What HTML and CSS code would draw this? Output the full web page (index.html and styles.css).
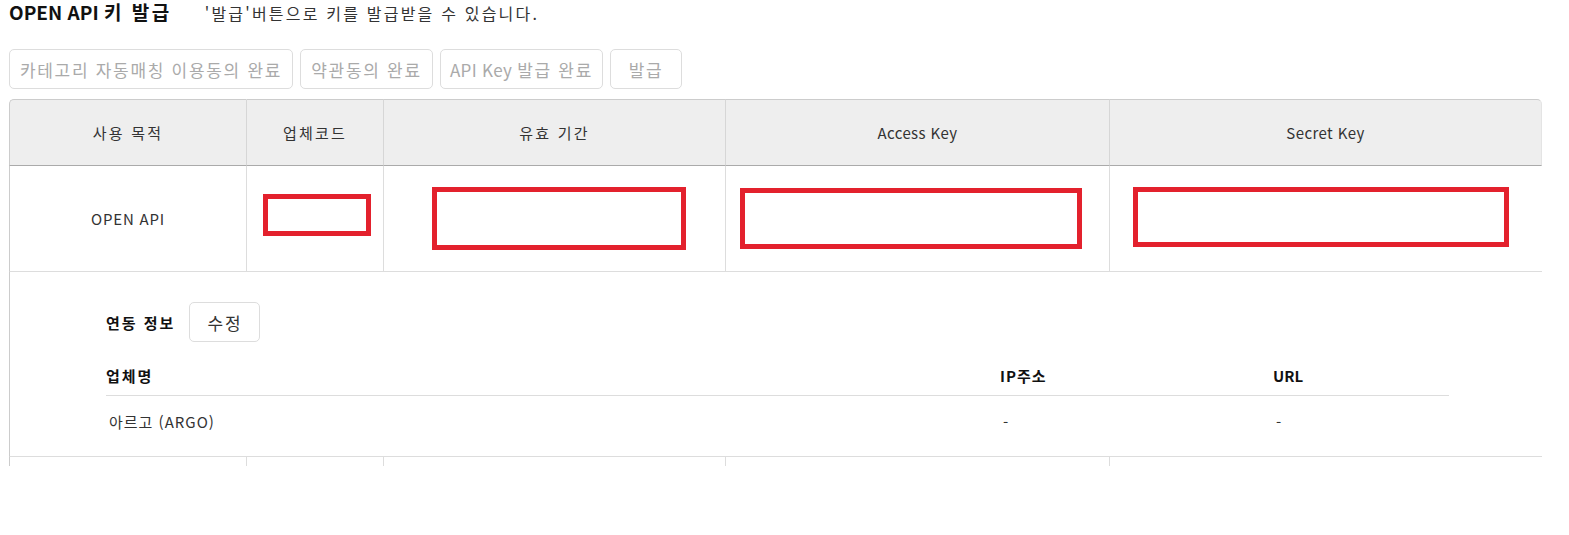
FILE: index.html
```html
<!DOCTYPE html>
<html lang="ko">
<head>
  <meta charset="UTF-8">
  <title>OPEN API 키 발급</title>
  <link rel="stylesheet" href="styles.css">
</head>
<body>
  <div class="api-page">
    <div class="page-head">
      <h2>OPEN API <span class="ko">키 발급</span></h2>
      <p>'발급'버튼으로 키를 발급받을 수 있습니다.</p>
    </div>

    <div class="step-buttons">
      <button class="btn btn-agree" disabled>카테고리 자동매칭 이용동의 완료</button>
      <button class="btn btn-terms" disabled>약관동의 완료</button>
      <button class="btn btn-key" disabled>API Key <span class="ko">발급 완료</span></button>
      <button class="btn btn-issue" disabled>발급</button>
    </div>

    <table class="key-table">
      <colgroup>
        <col class="c-purpose">
        <col class="c-code">
        <col class="c-period">
        <col class="c-access">
        <col class="c-secret">
      </colgroup>
      <thead>
        <tr>
          <th class="ko">사용 목적</th>
          <th class="ko">업체코드</th>
          <th class="ko">유효 기간</th>
          <th>Access Key</th>
          <th>Secret Key</th>
        </tr>
      </thead>
      <tbody>
        <tr class="key-row">
          <td class="purpose">OPEN API</td>
          <td><span class="mask mask-code"></span></td>
          <td><span class="mask mask-period"></span></td>
          <td><span class="mask mask-access"></span></td>
          <td><span class="mask mask-secret"></span></td>
        </tr>
        <tr class="detail-row">
          <td colspan="5">
            <div class="link-head">
              <strong>연동 정보</strong>
              <button class="btn btn-edit">수정</button>
            </div>
            <table class="link-table">
              <thead>
                <tr>
                  <th class="l-name">업체명</th>
                  <th class="l-ip">IP주소</th>
                  <th class="l-url">URL</th>
                </tr>
              </thead>
              <tbody>
                <tr>
                  <td class="company">아르고 (ARGO)</td>
                  <td>-</td>
                  <td>-</td>
                </tr>
              </tbody>
            </table>
          </td>
        </tr>
        <tr class="stub-row">
          <td></td><td></td><td></td><td></td><td></td>
        </tr>
      </tbody>
    </table>
  </div>
</body>
</html>
```

FILE: styles.css
```css
* {
  margin: 0;
  padding: 0;
  box-sizing: border-box;
}

body {
  font-family: "Noto Sans CJK KR", "Noto Sans", sans-serif;
  line-height: 1.4;
  color: #333;
  background-color: #fff;
}

.api-page {
  width: 1533px;
  margin-left: 9px;
}

.page-head {
  display: flex;
  align-items: baseline;
  gap: 33px;
  height: 26px;
  padding-top: 1px;
}

.page-head h2 {
  font-size: 19px;
  font-weight: 700;
  color: #111;
  line-height: 22px;
}

.page-head h2 .ko {
  letter-spacing: 2.5px;
}

.page-head p {
  font-size: 16px;
  color: #333;
  line-height: 22px;
  letter-spacing: 2.2px;
}

.step-buttons {
  display: flex;
  gap: 7px;
  margin-top: 23px;
}

.btn {
  font-family: inherit;
  font-size: 17px;
  height: 40px;
  padding: 0;
  background-color: #fff;
  border: 1px solid #ddd;
  border-radius: 5px;
  color: #333;
  letter-spacing: 1.7px;
  cursor: pointer;
}

.step-buttons .btn {
  color: #aaa;
  cursor: default;
}

.btn-agree { width: 284px; }
.btn-terms { width: 133px; }
.btn-key { width: 163px; letter-spacing: 0.3px; }
.btn-key .ko { letter-spacing: 1.7px; }
.btn-issue { width: 72px; }

/* key table */
.key-table {
  width: 100%;
  margin-top: 10px;
  border-collapse: separate;
  border-spacing: 0;
  table-layout: fixed;
  font-size: 15px;
}

.c-purpose { width: 238px; }
.c-code { width: 137px; }
.c-period { width: 342px; }
.c-access { width: 384px; }
.c-secret { width: 432px; }

.key-table > thead > tr > th {
  height: 67px;
  background-color: #eee;
  font-weight: 400;
  letter-spacing: 0.4px;
  border-top: 1px solid #ccc;
  border-bottom: 1px solid #aaa;
  border-right: 1px solid #d6d6d6;
}

.key-table > thead > tr > th.ko {
  letter-spacing: 2.2px;
}

.key-table > thead > tr > th:first-child {
  border-left: 1px solid #ccc;
  border-top-left-radius: 5px;
}

.key-table > thead > tr > th:last-child {
  border-right: 1px solid #e4e4e4;
  border-top-right-radius: 5px;
}

.key-table > tbody > tr > td {
  text-align: center;
  border-bottom: 1px solid #ddd;
  border-right: 1px solid #ddd;
}

.key-table > tbody > tr > td:first-child {
  border-left: 1px solid #ccc;
}

.key-table > tbody > tr > td:last-child {
  border-right: none;
}

.key-row > td {
  height: 106px;
}

.key-row .purpose {
  letter-spacing: 0.8px;
}

/* red marks over hidden values */
.mask {
  display: block;
  border: 5px solid #e3212d;
}

.mask-code {
  width: 108px;
  height: 42px;
  margin-left: 16px;
  margin-top: -7px;
}

.mask-period {
  width: 254px;
  height: 63px;
  margin-left: 48px;
}

.mask-access {
  width: 342px;
  height: 61px;
  margin-left: 14px;
}

.mask-secret {
  width: 376px;
  height: 60px;
  margin-left: 23px;
  margin-top: -3px;
}

/* detail row */
.key-table > tbody > tr.detail-row > td {
  text-align: left;
  vertical-align: top;
  height: 185px;
  padding: 30px 0 0 96px;
}

.link-head {
  display: flex;
  align-items: center;
  gap: 14px;
}

.link-head strong {
  font-size: 15px;
  font-weight: 700;
  color: #111;
  letter-spacing: 2px;
}

.btn-edit {
  width: 71px;
}

.link-table {
  width: 1343px;
  margin-top: 13px;
  border-collapse: collapse;
  table-layout: fixed;
  font-size: 15px;
}

.link-table th {
  padding: 10px 0 9px;
  text-align: left;
  font-weight: 700;
  color: #111;
  border-bottom: 1px solid #ddd;
}

.link-table .l-name {
  width: 894px;
  letter-spacing: 2px;
}

.link-table .l-ip {
  width: 273px;
  letter-spacing: 1px;
}

.link-table td {
  height: 46px;
  padding: 5px 0 0 3px;
  text-align: left;
}

.link-table .company {
  letter-spacing: 1px;
}

.key-table > tbody > tr.stub-row > td {
  height: 9px;
  border-bottom: none;
}
```
